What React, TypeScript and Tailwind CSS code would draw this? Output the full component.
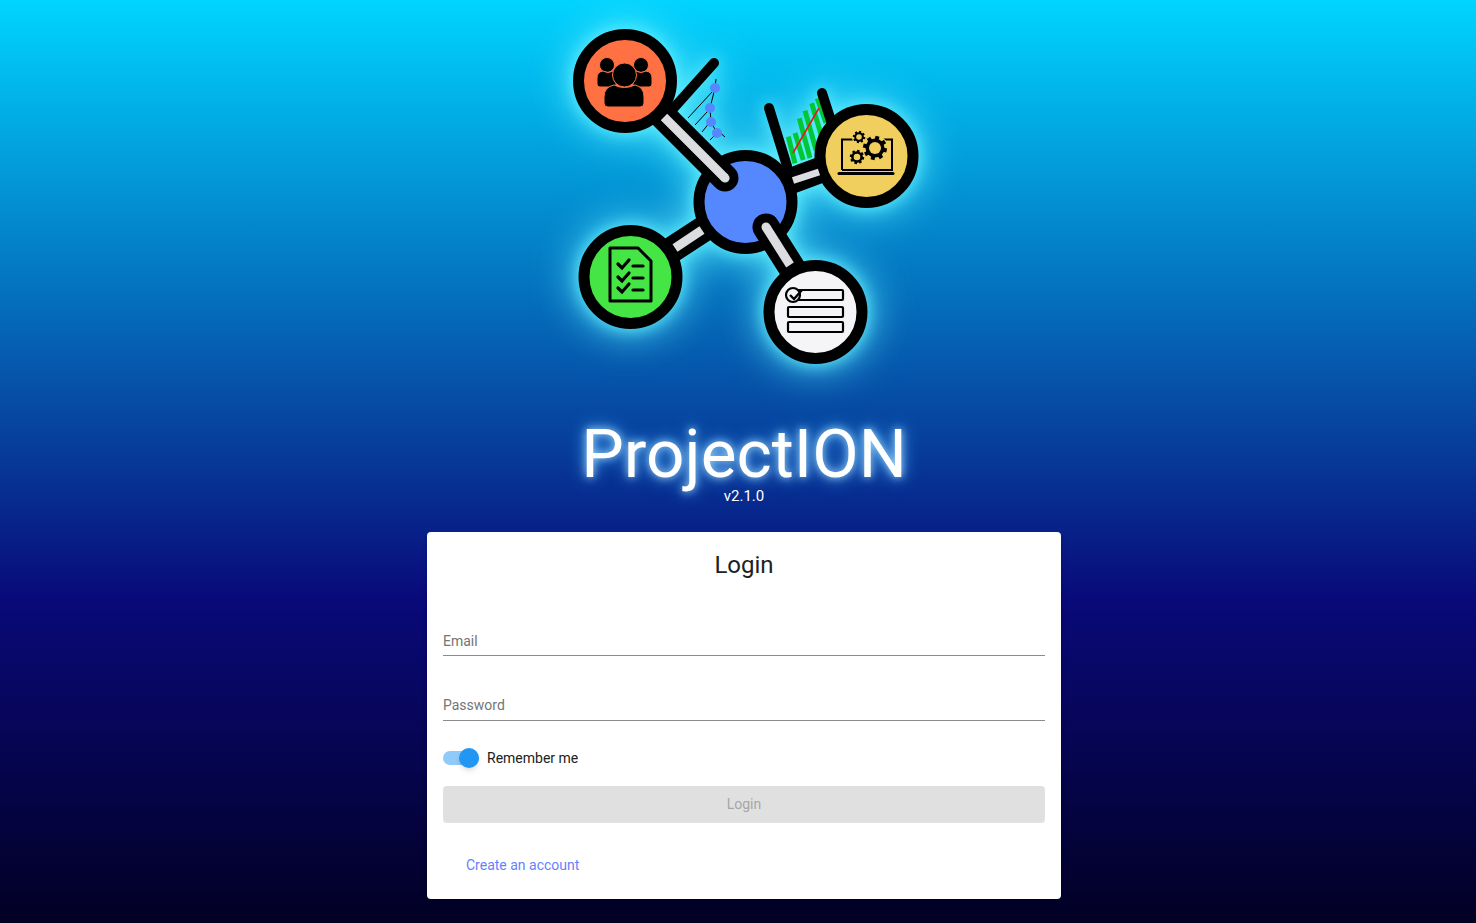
import React from 'react';

const Gear: React.FC<{ cx: number; cy: number; r: number; hole: number; tooth: number; out: number }> = ({ cx, cy, r, hole, tooth, out }) => {
  const teeth = [0, 45, 90, 135, 180, 225, 270, 315];
  return (
    <g>
      <circle cx={cx} cy={cy} r={out + 1} fill="#f0cf5e" />
      {teeth.map((a) => (
        <line
          key={a}
          x1={cx}
          y1={cy - r + 1}
          x2={cx}
          y2={cy - out}
          stroke="#000"
          strokeWidth={tooth}
          transform={`rotate(${a + 12} ${cx} ${cy})`}
        />
      ))}
      <circle cx={cx} cy={cy} r={r} fill="#000" />
      <circle cx={cx} cy={cy} r={hole} fill="#f0cf5e" />
    </g>
  );
};

const Logo: React.FC = () => (
  <svg
    viewBox="544 0 400 420"
    className="w-[400px] h-[420px] shrink-0 [filter:drop-shadow(0_0_8px_rgba(96,240,255,0.95))_drop-shadow(0_0_20px_rgba(96,240,255,0.85))]"
  >
    {/* chart behind the right node */}
    <g stroke="#00c832" strokeWidth="5">
      <line x1="788.3" y1="136.7" x2="795" y2="163.3" />
      <line x1="795" y1="133" x2="803.3" y2="160" />
      <line x1="799.3" y1="118.3" x2="810" y2="158" />
      <line x1="805" y1="110.7" x2="816" y2="150" />
      <line x1="811.7" y1="103.3" x2="821.7" y2="136.7" />
      <line x1="817.3" y1="98.3" x2="826" y2="123" />
    </g>
    <line x1="793" y1="153" x2="819" y2="108" stroke="#f01414" strokeWidth="1.6" />

    {/* chart behind the top left node */}
    <g stroke="#000" strokeWidth="1" fill="none">
      <line x1="688" y1="118" x2="712" y2="92" />
      <line x1="695" y1="125" x2="707" y2="112" />
      <line x1="702" y1="132" x2="710" y2="122" />
      <line x1="710" y1="140" x2="717" y2="133" />
      <line x1="717" y1="130" x2="725" y2="137" />
      <polyline points="716,79 715,88 710,108 711,122 717,133" />
    </g>
    <g fill="#5588ff">
      <circle cx="715" cy="88" r="5" />
      <circle cx="710" cy="108" r="5" />
      <circle cx="711" cy="122" r="5" />
      <circle cx="717" cy="133" r="5" />
    </g>

    {/* black arms */}
    <g stroke="#000" strokeLinecap="round" fill="none">
      <line x1="672" y1="110" x2="714" y2="63" strokeWidth="10" />
      <line x1="769" y1="108" x2="787" y2="166" strokeWidth="10" />
      <line x1="822" y1="93" x2="832" y2="124" strokeWidth="10" />
      <line x1="745" y1="198" x2="866" y2="153" strokeWidth="26" strokeLinecap="butt" />
      <line x1="745" y1="202" x2="630" y2="277" strokeWidth="26" strokeLinecap="butt" />
    </g>

    {/* nodes */}
    <circle cx="745.5" cy="202" r="46.5" fill="#5588ff" stroke="#000" strokeWidth="11" />
    <circle cx="866.5" cy="156" r="46.5" fill="#f0cf5e" stroke="#000" strokeWidth="11" />
    <circle cx="630.5" cy="277" r="46.5" fill="#44e544" stroke="#000" strokeWidth="11" />

    {/* links */}
    <g strokeLinecap="round" fill="none">
      <line x1="662" y1="115" x2="725" y2="178" stroke="#000" strokeWidth="27" />
      <line x1="766" y1="227" x2="802" y2="284" stroke="#000" strokeWidth="27" />
      <circle cx="625" cy="81" r="46.5" fill="#ff7043" stroke="#000" strokeWidth="11" />
      <circle cx="815.5" cy="312" r="46.5" fill="#f5f5f7" stroke="#000" strokeWidth="11" />
      <path d="M664 117L725 178" stroke="#dcdde0" strokeWidth="9" strokeLinecap="butt" />
      <line x1="725" y1="178" x2="725.1" y2="178.1" stroke="#dcdde0" strokeWidth="9" />
      <path d="M766 227L790 265" stroke="#dcdde0" strokeWidth="9" strokeLinecap="butt" />
      <line x1="766" y1="227" x2="766.1" y2="227.1" stroke="#dcdde0" strokeWidth="9" />
      <line x1="702" y1="230" x2="675" y2="248" stroke="#dcdde0" strokeWidth="9" strokeLinecap="butt" />
      <line x1="793" y1="180.5" x2="819" y2="172" stroke="#dcdde0" strokeWidth="7" strokeLinecap="butt" />
    </g>

    {/* users */}
    <g fill="#000" stroke="#ff7043" strokeWidth="1">
      <circle cx="607" cy="65" r="7.5" />
      <circle cx="641" cy="65" r="7.5" />
      <path d="M597 81v-3q0-6 6-7q5 3 10 0h3v16h-16q-3 0-3-3z" />
      <path d="M652 81v-3q0-6-6-7q-5 3-10 0h-3v16h16q3 0 3-3z" />
      <circle cx="624.5" cy="75" r="12" />
      <path d="M604 103v-6q0-10 10-12q10 5 21 0q9 2 9 12v6q0 4-4 4h-32q-4 0-4-4z" />
    </g>

    {/* laptop and gears */}
    <g fill="none" stroke="#000">
      <path d="M842 170V139.5H892V170h-50" strokeWidth="2" />
      <line x1="839" y1="173.5" x2="893" y2="173.5" strokeWidth="3" strokeLinecap="round" />
    </g>
    <Gear cx={875} cy={148} r={9.5} hole={6} tooth={4} out={12} />
    <Gear cx={859} cy={137} r={4.8} hole={2.8} tooth={2.2} out={6.2} />
    <Gear cx={857} cy={157} r={5.8} hole={3.3} tooth={2.6} out={7.2} />

    {/* document */}
    <g fill="none" stroke="#000">
      <path d="M610 248h28l13 13v40h-41z" strokeWidth="3" strokeLinejoin="round" />
      <g strokeWidth="3.2" strokeLinecap="round">
        <path d="M618 264l4 4 7-8M633 266h10" />
        <path d="M618 277l4 4 7-8M633 278h10" />
        <path d="M618 288l4 4 7-8M633 290h10" />
      </g>
    </g>

    {/* list */}
    <g fill="#f5f5f7" stroke="#000" strokeWidth="2.2">
      <rect x="790" y="290" width="53" height="10" rx="1" />
      <rect x="788" y="307" width="55" height="10" rx="1" />
      <rect x="788" y="322" width="55" height="10" rx="1" />
      <circle cx="793" cy="295" r="7" />
      <path d="M790 295l4 4 8-9" fill="none" strokeWidth="2.4" />
    </g>
  </svg>
);

const App: React.FC = () => {
  return (
    <div className="min-h-screen pl-3 flex flex-col items-center overflow-hidden font-[Roboto,sans-serif] bg-[linear-gradient(0deg,#020024_0%,#090979_35%,#00d4ff_100%)]">
      <Logo />
      <h1 className="text-[67.5px] leading-[68px] font-normal text-white [text-shadow:0_0_8px_#a8dcff,0_0_18px_#4db5ff]">
        ProjectION
      </h1>
      <p className="mt-px text-[15px] leading-[14px] text-white">v2.1.0</p>

      <div className="mt-[29px] w-[634px] h-[367px] bg-white rounded px-4 shadow-md flex flex-col">
        <h2 className="mt-[16px] text-2xl leading-[34px] text-center text-[#212121]">Login</h2>
        <div className="mt-[42px]">
          <input
            type="text"
            placeholder="Email"
            className="block w-full h-[32px] pt-[2px] bg-transparent border-b border-[#8c8c8c] outline-none text-sm text-black placeholder:text-[#757575] placeholder:opacity-100"
          />
        </div>
        <div className="mt-[33px]">
          <input
            type="password"
            placeholder="Password"
            className="block w-full h-[32px] bg-transparent border-b border-[#8c8c8c] outline-none text-sm text-black placeholder:text-[#757575] placeholder:opacity-100"
          />
        </div>
        <div className="mt-[25px] flex items-center h-[24px]">
          <span className="relative w-[36px] h-[14px] rounded-full bg-[#90caf9]">
            <span className="absolute right-0 -top-[3px] w-5 h-5 rounded-full bg-[#2196f3] shadow-md" />
          </span>
          <span className="ml-2 text-sm text-[#212121]">Remember me</span>
        </div>
        <button
          disabled
          className="mt-[16px] w-full h-[37px] pb-[2px] rounded bg-[#e0e0e0] text-sm text-[#a6a6a6]"
        >
          Login
        </button>
        <a className="mt-[32px] ml-[23px] text-sm leading-[20px] text-[#6582fb]">Create an account</a>
      </div>
    </div>
  );
};

export default App;
